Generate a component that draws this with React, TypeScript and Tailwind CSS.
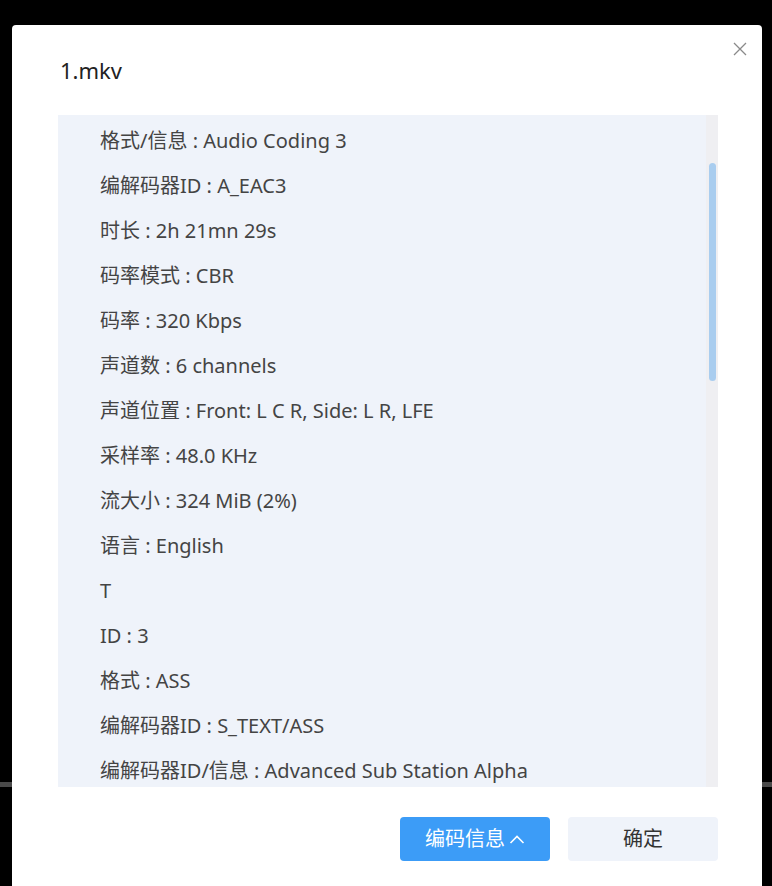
const rows = [
  '格式/信息 : Audio Coding 3',
  '编解码器ID : A_EAC3',
  '时长 : 2h 21mn 29s',
  '码率模式 : CBR',
  '码率 : 320 Kbps',
  '声道数 : 6 channels',
  '声道位置 : Front: L C R, Side: L R, LFE',
  '采样率 : 48.0 KHz',
  '流大小 : 324 MiB (2%)',
  '语言 : English',
  'T',
  'ID : 3',
  '格式 : ASS',
  '编解码器ID : S_TEXT/ASS',
  '编解码器ID/信息 : Advanced Sub Station Alpha',
]

export default function App() {
  return (
    <div
      className="relative h-[886px] w-[772px] overflow-hidden bg-black"
      style={{ fontFamily: '"Noto Sans", "Noto Sans CJK SC", sans-serif' }}
    >
      {/* page behind the dialog */}
      <div className="absolute left-0 right-0 top-[782px] h-[5px] bg-[#4a4a4a]" />

      <div className="absolute left-[12px] top-[25px] h-[880px] w-[750px] rounded-[4px] bg-white">
        <div className="flex h-[90px] items-start justify-between pl-[48px] pr-[14px]">
          <h1 className="pt-[29px] text-[22px] leading-[32px] text-[#222]">1.mkv</h1>
          <button className="mt-[16px] flex h-[16px] w-[16px] items-center justify-center">
            <svg width="14" height="14" viewBox="0 0 14 14" fill="none" stroke="#8a8a8a" strokeWidth="1.3">
              <path d="M1 1 L13 13 M13 1 L1 13" />
            </svg>
          </button>
        </div>

        <div className="ml-[46px] flex h-[672px] w-[660px] bg-[#eff3fa]">
          <div className="flex-1 overflow-hidden pl-[42px] pt-[3px]">
            {rows.map((r, i) => (
              <div key={i} className="flex h-[45px] items-center whitespace-nowrap text-[20px] text-[#444]">
                {r}
              </div>
            ))}
          </div>
          <div className="w-[12px] bg-[#efeff2] pt-[48px]">
            <div className="mx-auto h-[218px] w-[7px] rounded-full bg-[#a9cdef]" />
          </div>
        </div>

        <div className="mt-[30px] flex justify-end gap-[18px] pr-[44px]">
          <button className="flex h-[44px] w-[150px] items-center justify-center gap-[4px] rounded-[4px] bg-[#3c9cf7] text-[20px] text-white">
            编码信息
            <svg width="16" height="10" viewBox="0 0 16 10" fill="none" stroke="white" strokeWidth="1.6">
              <path d="M1.5 9 L8 2.5 L14.5 9" />
            </svg>
          </button>
          <button className="flex h-[44px] w-[150px] items-center justify-center rounded-[4px] bg-[#eff3fa] text-[20px] text-[#333]">
            确定
          </button>
        </div>
      </div>
    </div>
  )
}
